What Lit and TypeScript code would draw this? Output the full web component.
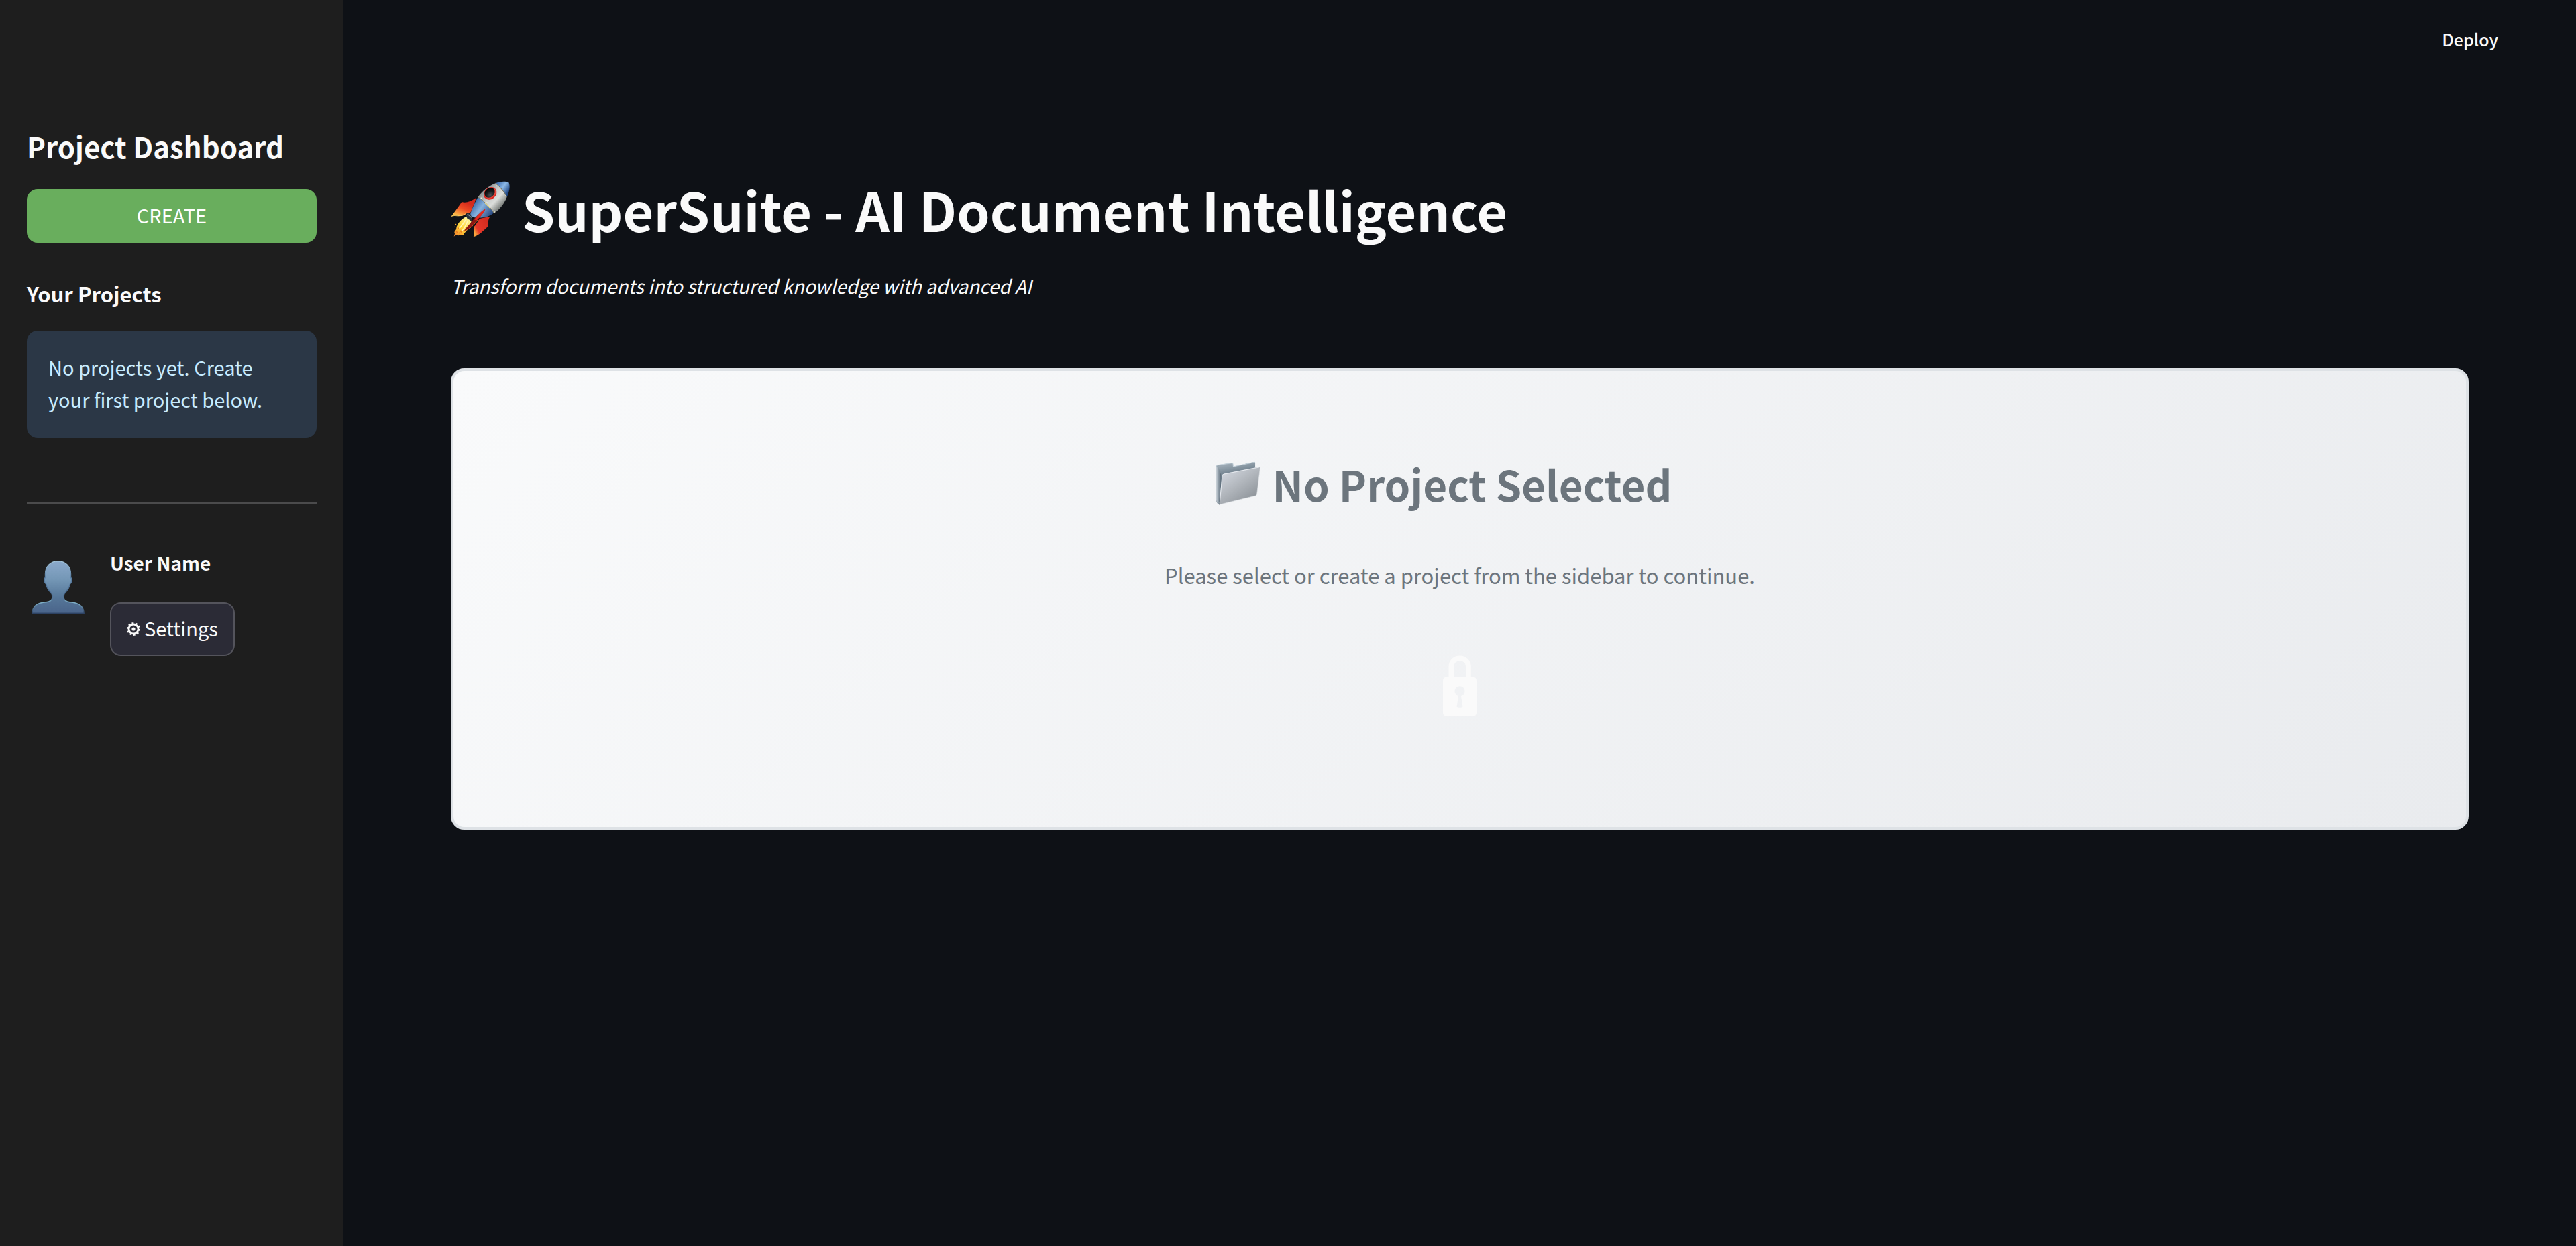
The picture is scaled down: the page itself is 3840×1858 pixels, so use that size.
import { LitElement, html, css } from "lit";
import { customElement } from "lit/decorators.js";

const rocketIcon = html`
  <svg class="rocket" viewBox="36 36 264 252" role="img" aria-label="Rocket">
    <defs>
      <linearGradient id="hull" gradientUnits="userSpaceOnUse" x1="175" y1="75" x2="262" y2="158">
        <stop offset="0" stop-color="#7f8587" />
        <stop offset="0.4" stop-color="#c9cccb" />
        <stop offset="0.65" stop-color="#dcdedb" />
        <stop offset="1" stop-color="#6a6f6c" />
      </linearGradient>
      <linearGradient id="nose" gradientUnits="userSpaceOnUse" x1="250" y1="45" x2="298" y2="80">
        <stop offset="0" stop-color="#4a79b8" />
        <stop offset="0.45" stop-color="#8db9e6" />
        <stop offset="1" stop-color="#1f4684" />
      </linearGradient>
      <linearGradient id="tail" gradientUnits="userSpaceOnUse" x1="132" y1="140" x2="215" y2="200">
        <stop offset="0" stop-color="#3b6aa8" />
        <stop offset="0.4" stop-color="#86b1de" />
        <stop offset="1" stop-color="#203f78" />
      </linearGradient>
      <linearGradient id="fin-left" gradientUnits="userSpaceOnUse" x1="105" y1="130" x2="75" y2="196">
        <stop offset="0" stop-color="#d42a1c" />
        <stop offset="0.45" stop-color="#ee4b24" />
        <stop offset="1" stop-color="#fbc04a" />
      </linearGradient>
      <linearGradient id="fin-right" gradientUnits="userSpaceOnUse" x1="205" y1="225" x2="140" y2="262">
        <stop offset="0" stop-color="#d32c1f" />
        <stop offset="0.75" stop-color="#e6382a" />
        <stop offset="1" stop-color="#f7a13c" />
      </linearGradient>
      <linearGradient id="flame" gradientUnits="userSpaceOnUse" x1="115" y1="205" x2="55" y2="280">
        <stop offset="0" stop-color="#fff59a" />
        <stop offset="0.5" stop-color="#ffd83a" />
        <stop offset="1" stop-color="#f2872c" />
      </linearGradient>
      <radialGradient id="glass" cx="0.4" cy="0.75" r="0.8">
        <stop offset="0" stop-color="#4b5257" />
        <stop offset="0.5" stop-color="#15181a" />
        <stop offset="1" stop-color="#000" />
      </radialGradient>
    </defs>
    <path d="M106 194 C90 202 74 216 66 232 L62 240 L60 252 L52 264 L54 272 L50 284 L60 276 L70 280 L80 276 L92 278 L95 270 C112 256 122 240 128 216 Z" fill="url(#flame)" />
    <path d="M104 206 C94 224 88 232 74 248 M112 212 C106 232 98 244 86 260" fill="none" stroke="#fff7b8" stroke-width="5" />
    <path d="M66 240 l5 9 M60 262 l8 5 M78 258 l6 8 M92 256 l4 8 M72 270 l6 -5" stroke="#e8791e" stroke-width="4" />
    <circle cx="58" cy="230" r="3" fill="#f0a52f" />
    <circle cx="55" cy="240" r="2" fill="#ee8d2c" />
    <path d="M85 129 Q112 137 149 111 L143 132 L124 176 L105 181 Q90 196 64 191 Q50 190 38 194 Q58 168 85 129 Z" fill="url(#fin-left)" />
    <path d="M39 193 Q54 188 68 192 Q90 194 106 180" fill="none" stroke="#ffd66b" stroke-width="2" />
    <path d="M212 194 C204 206 202 218 202 240 C182 256 168 276 138 286 C144 268 138 254 140 240 C154 226 156 214 166 204 Z" fill="url(#fin-right)" />
    <path d="M139 285 C144 268 138 254 140 240" fill="none" stroke="#f9b44a" stroke-width="2" />
    <path d="M104 190 L112 178 L132 190 L130 214 L110 205 Z" fill="#27323d" />
    <path d="M110 183 L131 200" stroke="#7d8b97" stroke-width="4" />
    <path d="M158 107 C148 124 134 150 124 180 Q122 190 134 197 C164 204 206 200 229 178 Q200 136 158 107 Z" fill="url(#tail)" />
    <path d="M158 107 C174 84 204 58 236 46 Q268 74 287 107 C277 134 255 164 230 179 Q200 134 158 107 Z" fill="url(#hull)" />
    <path d="M236 46 C256 37 280 36 295 42 C303 60 298 84 287 107 Q268 70 236 46 Z" fill="url(#nose)" />
    <path d="M236 46 Q268 70 287 107" fill="none" stroke="#8d8668" stroke-width="2.5" />
    <path d="M158 107 Q200 136 230 179" fill="none" stroke="#8f8a62" stroke-width="3" />
    <path d="M190 134 L212 157" stroke="#f3df77" stroke-width="4" />
    <g fill="#f6f2da">
      <circle cx="172" cy="112" r="2.5" />
      <circle cx="198" cy="132" r="2.5" />
      <circle cx="232" cy="174" r="2.5" />
      <circle cx="242" cy="58" r="2.5" />
      <circle cx="264" cy="78" r="2.5" />
      <circle cx="282" cy="102" r="2.5" />
    </g>
    <ellipse cx="212" cy="91" rx="31" ry="26" transform="rotate(-38 212 91)" fill="#d8251f" />
    <ellipse cx="213" cy="89" rx="28" ry="22" transform="rotate(-40 213 89)" fill="#e8453a" />
    <ellipse cx="210" cy="88" rx="25" ry="20" transform="rotate(-40 210 88)" fill="url(#glass)" />
    <path d="M190 161 C172 172 142 200 120 228 C106 244 97 254 96 260 C120 254 140 232 156 210 C170 192 184 178 190 161 Z" fill="#8f1712" />
    <path d="M190 161 C176 166 154 190 142 208 L150 212 C166 196 184 180 190 161 Z" fill="#e5291f" />
    <path d="M96 260 C120 252 138 234 156 210" fill="none" stroke="#e09a2f" stroke-width="2" />
  </svg>
`;

const folderIcon = html`
  <svg class="folder" viewBox="69 52 201 200" role="img" aria-label="Folder">
    <defs>
      <linearGradient id="folder-back" gradientUnits="userSpaceOnUse" x1="80" y1="60" x2="110" y2="230">
        <stop offset="0" stop-color="#aab6c0" />
        <stop offset="0.35" stop-color="#6e7f8c" />
        <stop offset="1" stop-color="#4d5d6a" />
      </linearGradient>
      <linearGradient id="folder-spine" gradientUnits="userSpaceOnUse" x1="70" y1="0" x2="96" y2="0">
        <stop offset="0" stop-color="#d3dae0" />
        <stop offset="0.4" stop-color="#94a1ac" />
        <stop offset="1" stop-color="#4a5864" />
      </linearGradient>
      <linearGradient id="folder-front" gradientUnits="userSpaceOnUse" x1="110" y1="95" x2="210" y2="240">
        <stop offset="0" stop-color="#d0d5dd" />
        <stop offset="0.5" stop-color="#b0b5bb" />
        <stop offset="1" stop-color="#8e949a" />
      </linearGradient>
    </defs>
    <path d="M70 76 Q71 70 78 69 L143 59 Q147 59 147 65 L148 76 L243 54 Q247 54 247 59 L247 110 L90 246 Q82 250 76 240 Q71 234 71 226 Z" fill="url(#folder-back)" />
    <path d="M70 76 L82 84 L92 110 L84 247 Q72 240 71 226 Z" fill="url(#folder-spine)" />
    <path d="M71 76 Q71 70 78 69 L143 60 Q147 60 147 65 L148 76 L246 56" fill="none" stroke="#c5d2dc" stroke-width="3" />
    <path d="M97 118 Q98 110 105 108 L264 77 Q270 76 269 84 L255 198 Q254 205 248 207 L88 246 Q84 247 85 240 Z" fill="url(#folder-front)" />
    <path d="M87 240 L98 118 Q99 111 106 110 L266 79" fill="none" stroke="#e6eaef" stroke-width="3" />
    <path d="M269 84 L255 198 Q254 205 248 207 L88 246" fill="none" stroke="#dfe3e7" stroke-width="2" />
  </svg>
`;

const lockIcon = html`
  <svg class="lock" viewBox="93 80 150 271" role="img" aria-label="Locked">
    <path d="M130 182 V130 C130 106 148 92 168 92 C188 92 207 106 207 130 V182" fill="none" stroke="#fafafa" stroke-width="23" />
    <path fill="#fafafa" fill-rule="evenodd" d="M109 177 H227 Q243 177 243 193 V335 Q243 351 227 351 H109 Q93 351 93 335 V193 Q93 177 109 177 Z M162 262 L155 309 Q155 315 168 315 Q181 315 181 309 L174 262 A22.500 22.500 0 1 0 162 262 Z" />
  </svg>
`;

const avatarIcon = html`
  <svg class="avatar" viewBox="0 0 79 79" role="img" aria-label="User">
    <defs>
      <linearGradient id="bust" x1="0" y1="0" x2="0" y2="1">
        <stop offset="0" stop-color="#8ba9cb" />
        <stop offset="0.35" stop-color="#7497b6" />
        <stop offset="0.7" stop-color="#557698" />
        <stop offset="1" stop-color="#4a648a" />
      </linearGradient>
      <linearGradient id="rim" x1="0" y1="0" x2="0" y2="1">
        <stop offset="0" stop-color="#a5c8dc" />
        <stop offset="0.3" stop-color="#5d82a6" />
        <stop offset="0.66" stop-color="#45658a" />
        <stop offset="0.8" stop-color="#7fb0c8" />
        <stop offset="1" stop-color="#2d4263" />
      </linearGradient>
    </defs>
    <path d="M39.500 0.700 C28 0.700 20.500 9 20.500 20 V25.500 C18.500 26 18.500 33 21.500 35 C23 42 26 45 30 49.500 C31 52 31 56 30 58 C27 62 22 62 16 62.500 C7 64 1.500 69 0.800 78.300 H78.200 C77.500 69 72 64 63 62.500 C57 62 52 62 49 58 C48 56 48 52 49 49.500 C53 45 56 42 57.500 35 C60.500 33 60.500 26 58.500 25.500 V20 C58.500 9 51 0.700 39.500 0.700 Z" fill="url(#bust)" stroke="url(#rim)" stroke-width="1.400" />
  </svg>
`;

const gearIcon = html`
  <svg class="gear" viewBox="0 0 20 20" aria-hidden="true">
    <circle cx="10" cy="10" r="7" fill="none" stroke="currentColor" stroke-width="2.800" />
    <circle cx="10" cy="10" r="8.900" fill="none" stroke="currentColor" stroke-width="2.200" stroke-dasharray="2.800 2.790" />
    <circle cx="10" cy="10" r="2.600" fill="currentColor" />
  </svg>
`;

@customElement("project-sidebar")
export class ProjectSidebar extends LitElement {
  static styles = css`
    :host {
      display: block;
      flex: none;
      box-sizing: border-box;
      width: 512px;
      padding: 189px 40px 40px;
      background: #1e1e1e;
    }
    .title {
      margin: 0 0 35px;
      font-size: 42px;
      line-height: 58px;
      font-weight: 700;
    }
    .button {
      display: flex;
      align-items: center;
      justify-content: center;
      height: 80px;
      padding: 0 23px 4px;
      border: 2px solid #54545c;
      border-radius: 16px;
      background: #2b2b36;
      color: inherit;
      font: inherit;
      cursor: pointer;
    }
    .create {
      width: 100%;
      border-color: #69ae5d;
      background: #69ae5d;
      color: #fff;
    }
    .subtitle {
      margin: 54px 0 33px;
      font-size: 31px;
      line-height: 44px;
      font-weight: 700;
    }
    .notice {
      margin: 0;
      padding: 30px 32px 34px;
      border-radius: 16px;
      background: #2b3746;
      color: #c7ebff;
    }
    .divider {
      margin: 96px 0 64px;
      border: 0;
      border-top: 2px solid #4b4b4c;
    }
    .user {
      display: flex;
      gap: 38px;
      padding-left: 7px;
    }
    .avatar {
      flex: none;
      width: 79px;
      height: 79px;
      margin-top: 21px;
    }
    .details {
      display: flex;
      flex-direction: column;
      align-items: flex-start;
      gap: 35px;
    }
    .name {
      margin: 0;
      font-size: 28px;
      font-weight: 700;
    }
    .settings {
      gap: 6px;
    }
    .gear {
      width: 20px;
      height: 20px;
      margin-top: 4px;
    }
  `;

  render() {
    return html`
      <h2 class="title">Project Dashboard</h2>
      <button class="button create" type="button">CREATE</button>
      <h3 class="subtitle">Your Projects</h3>
      <p class="notice">No projects yet. Create your first project below.</p>
      <hr class="divider" />
      <div class="user">
        ${avatarIcon}
        <div class="details">
          <p class="name">User Name</p>
          <button class="button settings" type="button">${gearIcon}Settings</button>
        </div>
      </div>
    `;
  }
}

@customElement("empty-project")
export class EmptyProject extends LitElement {
  static styles = css`
    :host {
      display: flex;
      flex-direction: column;
      align-items: center;
      padding: 125px 64px 165px;
      border: 4px solid #dee2e6;
      border-radius: 20px;
      background: linear-gradient(135deg, #f9fafb 0%, #e9ebee 100%);
      color: #6c757d;
      text-align: center;
    }
    .heading {
      display: flex;
      align-items: center;
      gap: 18px;
      margin: 0;
      padding-right: 48px;
      font-size: 62px;
      line-height: 86px;
      font-weight: 700;
    }
    .folder {
      width: 67px;
      height: 66px;
    }
    .hint {
      margin: 69px 0 94px;
      font-size: 31px;
      line-height: 50px;
    }
    .lock {
      width: 50px;
      height: 91px;
    }
  `;

  render() {
    return html`
      <h2 class="heading">${folderIcon}<span>No Project Selected</span></h2>
      <p class="hint">Please select or create a project from the sidebar to continue.</p>
      ${lockIcon}
    `;
  }
}

@customElement("app-root")
export class AppRoot extends LitElement {
  static styles = css`
    :host {
      display: flex;
      min-height: 100vh;
      background: #0e1116;
      color: #fafafa;
      font-family: "Noto Sans CJK SC", "Noto Sans", sans-serif;
      font-size: 29px;
      line-height: 48px;
    }
    .main {
      flex: 1;
      min-width: 0;
    }
    .toolbar {
      display: flex;
      align-items: center;
      justify-content: flex-end;
      height: 116px;
      padding-right: 116px;
    }
    .deploy {
      padding: 0;
      border: 0;
      background: none;
      color: inherit;
      font: inherit;
      font-size: 25px;
      font-weight: 500;
      cursor: pointer;
    }
    .content {
      padding: 143px 160px 160px;
    }
    .title {
      display: flex;
      align-items: center;
      gap: 18px;
      margin: 0 0 37px;
      font-size: 79px;
      line-height: 106px;
      font-weight: 700;
    }
    .rocket {
      width: 88px;
      height: 84px;
    }
    .tagline {
      margin: 0 0 99px;
      font-size: 28px;
      font-style: italic;
    }
  `;

  render() {
    return html`
      <project-sidebar></project-sidebar>
      <main class="main">
        <header class="toolbar">
          <button class="deploy" type="button">Deploy</button>
        </header>
        <section class="content">
          <h1 class="title">${rocketIcon}<span>SuperSuite - AI Document Intelligence</span></h1>
          <p class="tagline">Transform documents into structured knowledge with advanced AI</p>
          <empty-project></empty-project>
        </section>
      </main>
    `;
  }
}
